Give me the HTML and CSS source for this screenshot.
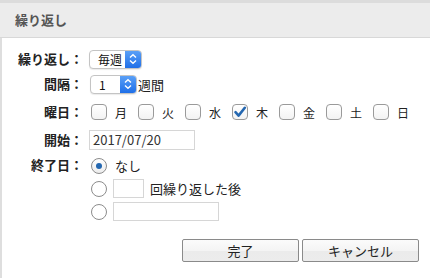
FILE: index.html
```html
<!DOCTYPE html>
<html lang="ja">
<head>
<meta charset="utf-8">
<link rel="stylesheet" href="styles.css">
</head>
<body>
<div class="topbar"></div>
<div class="header">繰り返し</div>
<div class="content">
  <div class="row r1">
    <div class="label">繰り返し：</div>
    <div class="select sel-freq"><span class="sel-text">毎週</span><span class="sel-arrow"><svg width="10" height="12" viewBox="0 0 10 12"><path d="M2 4.5 L5 1.8 L8 4.5 M2 7.5 L5 10.2 L8 7.5" fill="none" stroke="#fff" stroke-width="1.4"/></svg></span></div>
  </div>
  <div class="row r2">
    <div class="label">間隔：</div>
    <div class="select sel-int"><span class="sel-text">1</span><span class="sel-arrow"><svg width="10" height="12" viewBox="0 0 10 12"><path d="M2 4.5 L5 1.8 L8 4.5 M2 7.5 L5 10.2 L8 7.5" fill="none" stroke="#fff" stroke-width="1.4"/></svg></span></div>
    <span class="unit">週間</span>
  </div>
  <div class="row r3">
    <div class="label">曜日：</div>
    <div class="days">
      <div class="day"><span class="cb"></span><span class="dl">月</span></div>
      <div class="day"><span class="cb"></span><span class="dl">火</span></div>
      <div class="day"><span class="cb"></span><span class="dl">水</span></div>
      <div class="day"><span class="cb checked"><svg width="14" height="14" viewBox="0 0 14 14"><path d="M2.5 7.2 L5.6 10.6 L11.8 2.8" fill="none" stroke="#2467b0" stroke-width="2.6" stroke-linecap="round" stroke-linejoin="round"/></svg></span><span class="dl">木</span></div>
      <div class="day"><span class="cb"></span><span class="dl">金</span></div>
      <div class="day"><span class="cb"></span><span class="dl">土</span></div>
      <div class="day"><span class="cb"></span><span class="dl">日</span></div>
    </div>
  </div>
  <div class="row r4">
    <div class="label">開始：</div>
    <div class="input date">2017/07/20</div>
  </div>
  <div class="row r5">
    <div class="label">終了日：</div>
    <div class="opts">
      <div class="opt"><span class="radio on"></span><span class="opt-text">なし</span></div>
      <div class="opt"><span class="radio"></span><span class="input count"></span><span class="opt-text after">回繰り返した後</span></div>
      <div class="opt"><span class="radio"></span><span class="input enddate"></span></div>
    </div>
  </div>
  <div class="buttons">
    <div class="btn">完了</div>
    <div class="btn">キャンセル</div>
  </div>
</div>
</body>
</html>
```

FILE: styles.css
```css
html, body {
  margin: 0;
  padding: 0;
  background: #fff;
  width: 430px;
  height: 278px;
  overflow: hidden;
  font-family: "Noto Sans CJK JP", "Noto Sans", sans-serif;
  font-size: 13px;
  color: #222;
}
.topbar {
  height: 3px;
  background: #dcdcdc;
}
.header {
  height: 34px;
  line-height: 34px;
  background: #ececec;
  border-bottom: 1px solid #d8d8d8;
  padding-left: 15px;
  font-weight: bold;
  color: #555;
  font-size: 13px;
}
.content {
  border-left: 2px solid #dedede;
  height: 240px;
  box-sizing: border-box;
  padding-top: 10px;
}
.row {
  display: flex;
  align-items: center;
  height: 22px;
}
.r2 { margin-top: 3px; }
.r3 { margin-top: 5px; height: 24px; }
.r4 { margin-top: 5px; }
.r5 { margin-top: 3px; height: auto; align-items: flex-start; }
.label {
  width: 81px;
  text-align: right;
  font-weight: bold;
  color: #222;
  margin-right: 6px;
  line-height: 22px;
}
.select {
  display: flex;
  height: 17px;
  border: 1px solid #c4c4c4;
  border-radius: 4px;
  background: #fff;
  overflow: hidden;
  box-shadow: 0 1px 1px rgba(0,0,0,0.08);
}
.sel-text {
  flex: 1;
  line-height: 17px;
  font-size: 12px;
  padding-left: 8px;
  color: #111;
}
.sel-arrow {
  width: 16px;
  background: linear-gradient(#5aa0f7, #1f6fe8);
  display: flex;
  align-items: center;
  justify-content: center;
}
.sel-freq { width: 51px; }
.sel-int { width: 45px; margin-left: 1px; }
.unit { margin-left: 1px; }
.days {
  display: flex;
  margin-left: 2px;
}
.day {
  display: flex;
  align-items: center;
  width: 47px;
}
.cb {
  width: 16px;
  height: 16px;
  box-sizing: border-box;
  border: 1px solid #9a9a9a;
  border-radius: 4px;
  background: linear-gradient(#fff, #f3f3f3);
  display: flex;
  align-items: center;
  justify-content: center;
}
.dl {
  margin-left: 8px;
  font-size: 12px;
}
.input {
  box-sizing: border-box;
  border: 1px solid #d6d6d6;
  background: #fff;
}
.date {
  width: 106px;
  height: 20px;
  line-height: 18px;
  font-size: 13px;
  padding-left: 3px;
  color: #333;
}
.opts {
  display: flex;
  flex-direction: column;
  margin-left: 2px;
}
.opt {
  display: flex;
  align-items: center;
  height: 23px;
}
.radio {
  width: 16px;
  height: 16px;
  box-sizing: border-box;
  border: 1px solid #8c8c8c;
  border-radius: 50%;
  background: #fff;
  position: relative;
}
.radio.on {
  background: linear-gradient(#fff, #ececec);
}
.radio.on::after {
  content: "";
  position: absolute;
  left: 4px;
  top: 4px;
  width: 6px;
  height: 6px;
  border-radius: 50%;
  background: #2467b0;
}
.opt-text {
  margin-left: 8px;
}
.count {
  width: 31px;
  height: 19px;
  margin-left: 6px;
}
.after {
  margin-left: 6px;
}
.enddate {
  width: 106px;
  height: 19px;
  margin-left: 6px;
}
.buttons {
  display: flex;
  gap: 3px;
  margin-top: 16px;
  margin-left: 180px;
}
.btn {
  width: 117px;
  height: 23px;
  box-sizing: border-box;
  border: 1px solid #8a8a8a;
  border-radius: 2px;
  background: linear-gradient(#fbfbfb, #f4f4f4 50%, #ebebeb 51%, #ececec);
  text-align: center;
  line-height: 21px;
  color: #222;
}
```
